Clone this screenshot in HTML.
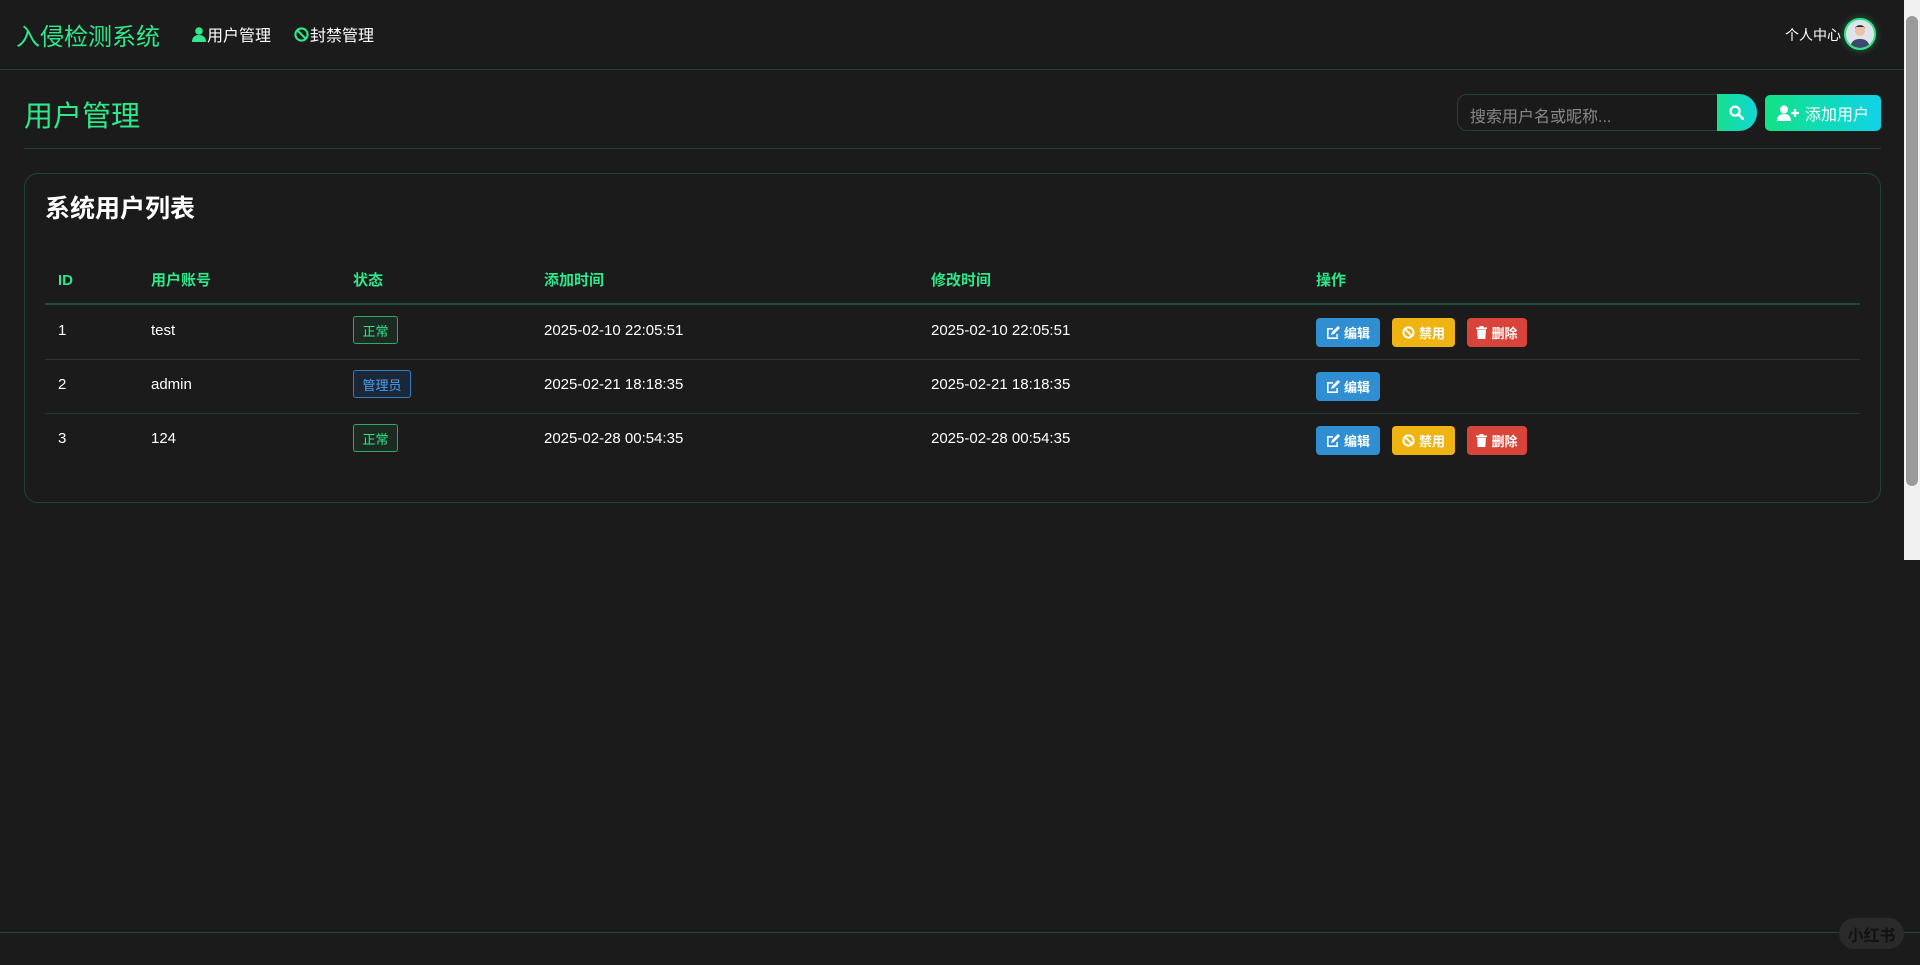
<!DOCTYPE html>
<html><head><meta charset="utf-8"><style>
*{box-sizing:border-box;margin:0;padding:0}
body{width:1920px;height:965px;background:#1b1b1b;font-family:"Liberation Sans","Noto Sans CJK SC",sans-serif;color:#eee;position:relative;overflow:hidden}
.abs{position:absolute}
.nav{left:0;top:0;width:1904px;height:70px;border-bottom:1px solid #1f4436}
.logo{left:16px;top:17px;font-size:24px;color:#2ee88a;white-space:nowrap}
.ni{top:22px;font-size:16px;color:#fff;display:flex;align-items:center;white-space:nowrap}
.ni svg{margin-right:1px}
.pc{left:1785px;top:25px;font-size:14px;color:#fff}
.av{left:1844px;top:18px;width:32px;height:32px;border-radius:50%;border:2px solid #2ee88a;background:#dfe3ea;overflow:hidden;box-shadow:0 0 8px rgba(46,232,138,.4)}
.ptitle{left:24px;top:93px;font-size:29px;color:#2ee88a}
.divider{left:24px;top:148px;width:1857px;height:1px;background:#1f4436}
.search{left:1457px;top:94px;width:260px;height:37px;border:1px solid #1f4436;border-right:none;border-radius:10px 0 0 10px;background:#1a1a1a;font-size:16px;color:#888;padding:8px 12px}
.sbtn{left:1717px;top:94px;width:40px;height:37px;border-radius:0 18px 18px 0;background:linear-gradient(90deg,#17e08a,#11d6d6)}
.add{left:1765px;top:95px;width:116px;height:36px;border-radius:5px;background:linear-gradient(90deg,#11e285,#10d3e8);color:#fff;font-size:16px;display:flex;align-items:center;justify-content:center;gap:6px}
.card{left:24px;top:173px;width:1857px;height:330px;border:1px solid #1f4436;border-radius:14px}
.ctitle{left:45px;top:189px;font-size:25px;font-weight:bold;color:#fff}
.th{top:271px;font-size:15px;line-height:20px;font-weight:bold;color:#2ee88a}
.hline{left:45px;top:303px;width:1815px;height:2px;background:#1f4a3c}
.rline{left:45px;width:1815px;height:1px;background:#253530}
.td{font-size:15px;line-height:20px;color:#fff}
.badge{height:28px;border-radius:3px;font-size:13px;display:flex;align-items:center;justify-content:center}
.g{border:1px solid #2ea866;color:#2ee88a;background:#1c2a22;width:45px}
.b{border:1px solid #2f7fc6;color:#4aa3f0;background:#1b2636;width:58px}
.btn{height:29px;border-radius:4px;color:#fff;font-size:13px;font-weight:bold;display:flex;align-items:center;justify-content:center;gap:4px}
.e{background:#2f8fd2;width:64px}
.d{background:#f0b412;width:63px}
.x{background:#d8443a;width:60px}
.bot{left:0;top:932px;width:1920px;height:1px;background:#24483c}
.wm{left:1839px;top:918px;width:65px;height:31px;border-radius:16px;background:#2a2a2a;color:#111;font-size:16px;font-weight:bold;display:flex;align-items:center;justify-content:center}
.sb{left:1904px;top:0;width:16px;height:560px;background:#f1f1f1}
.thumb{left:1906px;top:16px;width:12px;height:470px;background:#9a9a9a;border-radius:6px}
</style></head><body>
<div class="abs nav"></div>
<div class="abs logo">入侵检测系统</div>
<div class="abs ni" style="left:192px"><svg width="14" height="15" viewBox="0 0 14 15"><circle cx="7" cy="4" r="3.8" fill="#2ee88a"/><path d="M0 15c0-5 3-7 7-7s7 2 7 7z" fill="#2ee88a"/></svg>用户管理</div>
<div class="abs ni" style="left:294px"><svg width="15" height="15" viewBox="0 0 16 16"><circle cx="8" cy="8" r="6.5" fill="none" stroke="#2ee88a" stroke-width="2.2"/><path d="M3.5 3.5l9 9" stroke="#2ee88a" stroke-width="2.2"/></svg>封禁管理</div>
<div class="abs pc">个人中心</div>
<div class="abs av"><svg width="28" height="28" viewBox="0 0 28 28"><circle cx="14" cy="11" r="5" fill="#e8c3a8"/><path d="M9 9c0-5 10-5 10 0l-1-2h-8z" fill="#222"/><path d="M4 28c1-7 5-9 10-9s9 2 10 9z" fill="#3b4a6a"/></svg></div>
<div class="abs ptitle">用户管理</div>
<div class="abs divider"></div>
<div class="abs search">搜索用户名或昵称...</div>
<div class="abs sbtn"><svg style="position:absolute;left:12px;top:11px" width="15" height="15" viewBox="0 0 16 16"><circle cx="6.5" cy="6.5" r="4.8" fill="none" stroke="#fff" stroke-width="2.4"/><path d="M10 10l4.5 4.5" stroke="#fff" stroke-width="2.8" stroke-linecap="round"/></svg></div>
<div class="abs add"><svg width="22" height="16" viewBox="0 0 22 16"><circle cx="7" cy="4.5" r="4" fill="#fff"/><path d="M0 16c0-5 3-7 7-7s7 2 7 7z" fill="#fff"/><path d="M18 4v8M14 8h8" stroke="#fff" stroke-width="2.2"/></svg>添加用户</div>
<div class="abs card"></div>
<div class="abs ctitle">系统用户列表</div>
<div class="abs th" style="left:58px">ID</div>
<div class="abs th" style="left:151px">用户账号</div>
<div class="abs th" style="left:353px">状态</div>
<div class="abs th" style="left:544px">添加时间</div>
<div class="abs th" style="left:931px">修改时间</div>
<div class="abs th" style="left:1316px">操作</div>
<div class="abs hline"></div>
<div class="abs rline" style="top:359px"></div>
<div class="abs rline" style="top:413px"></div>

<div class="abs td" style="left:58px;top:321px">1</div>
<div class="abs td" style="left:151px;top:321px">test</div>
<div class="abs badge g" style="left:353px;top:316px">正常</div>
<div class="abs td" style="left:544px;top:321px">2025-02-10 22:05:51</div>
<div class="abs td" style="left:931px;top:321px">2025-02-10 22:05:51</div>

<div class="abs td" style="left:58px;top:375px">2</div>
<div class="abs td" style="left:151px;top:375px">admin</div>
<div class="abs badge b" style="left:353px;top:370px">管理员</div>
<div class="abs td" style="left:544px;top:375px">2025-02-21 18:18:35</div>
<div class="abs td" style="left:931px;top:375px">2025-02-21 18:18:35</div>

<div class="abs td" style="left:58px;top:429px">3</div>
<div class="abs td" style="left:151px;top:429px">124</div>
<div class="abs badge g" style="left:353px;top:424px">正常</div>
<div class="abs td" style="left:544px;top:429px">2025-02-28 00:54:35</div>
<div class="abs td" style="left:931px;top:429px">2025-02-28 00:54:35</div>

<div class="abs btn e" style="left:1316px;top:318px"><svg width="14" height="13" viewBox="0 0 14 13"><path d="M1 2h6v1.6H2.6v7.8h7.8V8H12v5H1z" fill="#fff"/><path d="M5 9l1-3 6-6 2 2-6 6z" fill="#fff"/></svg>编辑</div>
<div class="abs btn d" style="left:1392px;top:318px"><svg width="13" height="13" viewBox="0 0 16 16"><circle cx="8" cy="8" r="6.3" fill="none" stroke="#fff" stroke-width="2.4"/><path d="M3.5 3.5l9 9" stroke="#fff" stroke-width="2.4"/></svg>禁用</div>
<div class="abs btn x" style="left:1467px;top:318px"><svg width="11" height="13" viewBox="0 0 11 13"><path d="M0 1.5h11v1.5H0zM3.5 0h4v1.5h-4zM1 3.5h9l-.7 9.5H1.7z" fill="#fff"/></svg>删除</div>

<div class="abs btn e" style="left:1316px;top:372px"><svg width="14" height="13" viewBox="0 0 14 13"><path d="M1 2h6v1.6H2.6v7.8h7.8V8H12v5H1z" fill="#fff"/><path d="M5 9l1-3 6-6 2 2-6 6z" fill="#fff"/></svg>编辑</div>

<div class="abs btn e" style="left:1316px;top:426px"><svg width="14" height="13" viewBox="0 0 14 13"><path d="M1 2h6v1.6H2.6v7.8h7.8V8H12v5H1z" fill="#fff"/><path d="M5 9l1-3 6-6 2 2-6 6z" fill="#fff"/></svg>编辑</div>
<div class="abs btn d" style="left:1392px;top:426px"><svg width="13" height="13" viewBox="0 0 16 16"><circle cx="8" cy="8" r="6.3" fill="none" stroke="#fff" stroke-width="2.4"/><path d="M3.5 3.5l9 9" stroke="#fff" stroke-width="2.4"/></svg>禁用</div>
<div class="abs btn x" style="left:1467px;top:426px"><svg width="11" height="13" viewBox="0 0 11 13"><path d="M0 1.5h11v1.5H0zM3.5 0h4v1.5h-4zM1 3.5h9l-.7 9.5H1.7z" fill="#fff"/></svg>删除</div>

<div class="abs bot"></div>
<div class="abs wm">小红书</div>
<div class="abs sb"></div>
<div class="abs thumb"></div>
</body></html>
